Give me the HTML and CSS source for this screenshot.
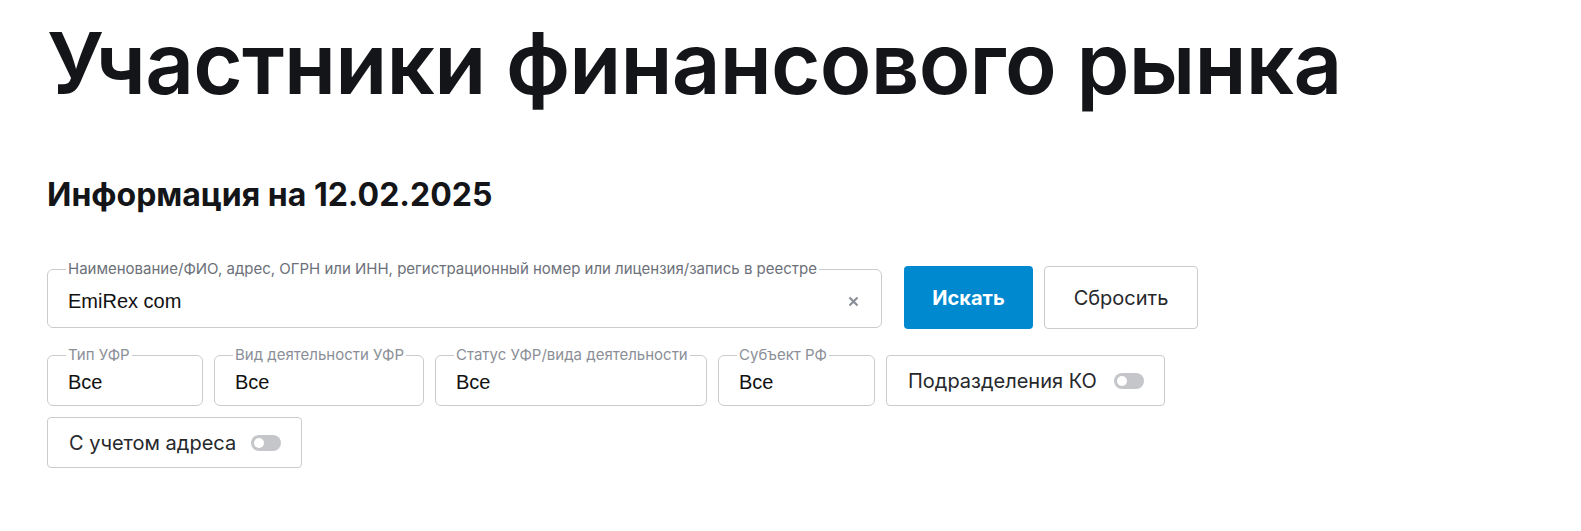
FILE: index.html
```html
<!DOCTYPE html>
<html lang="ru">
<head>
    <meta charset="UTF-8">
    <meta name="viewport" content="width=device-width, initial-scale=1.0">
    <title>Участники финансового рынка</title>
    <link rel="stylesheet" href="styles.css">
</head>
<body>
    <section class="page">
        <h1>Участники финансового рынка</h1>
        <h2>Информация на 12.02.2025</h2>

        <div class="search-row">
            <fieldset class="field field-search">
                <legend>Наименование/ФИО, адрес, ОГРН или ИНН, регистрационный номер или лицензия/запись в реестре</legend>
                <input type="text" value="EmiRex com">
                <svg class="clear" width="11" height="11" viewBox="0 0 11 11">
                    <path d="M1.5 1.5 L9.5 9.5 M9.5 1.5 L1.5 9.5" stroke="#8a8e96" stroke-width="2.2" fill="none"/>
                </svg>
            </fieldset>
            <button class="btn btn-primary">Искать</button>
            <button class="btn btn-reset">Сбросить</button>
        </div>

        <div class="filters filters-main">
            <fieldset class="field w-type">
                <legend>Тип УФР</legend>
                <span class="value">Все</span>
            </fieldset>
            <fieldset class="field w-kind">
                <legend>Вид деятельности УФР</legend>
                <span class="value">Все</span>
            </fieldset>
            <fieldset class="field w-status">
                <legend>Статус УФР/вида деятельности</legend>
                <span class="value">Все</span>
            </fieldset>
            <fieldset class="field w-region">
                <legend>Субъект РФ</legend>
                <span class="value">Все</span>
            </fieldset>
            <label class="switch-box w-ko">
                Подразделения КО
                <span class="switch"></span>
            </label>
        </div>

        <div class="filters">
            <label class="switch-box w-addr">
                С учетом адреса
                <span class="switch"></span>
            </label>
        </div>
    </section>
</body>
</html>
```

FILE: styles.css
```css
body {
    margin: 0;
    padding: 0;
    background-color: #fff;
    font-family: Inter, "Noto Sans", sans-serif;
    color: #141518;
}

.page {
    padding: 14px 47px 0 47px;
}

h1 {
    margin: 0;
    font-size: 85px;
    font-weight: 600;
    line-height: 100px;
    letter-spacing: -0.8px;
}

h2 {
    margin: 62px 0 0 0;
    font-size: 32px;
    font-weight: 700;
    line-height: 38px;
}

.search-row {
    display: flex;
    align-items: flex-end;
    margin-top: 46px;
}

.field {
    margin: 0;
    padding: 0 8px 4px 20px;
    border: 1px solid #c9cbcf;
    border-radius: 6px;
    display: flex;
    align-items: center;
    box-sizing: border-box;
    min-width: 0;
}

.field legend {
    margin-left: -2px;
    padding: 0 2px;
    font-size: 15px;
    line-height: 18px;
    color: #8b8f97;
    white-space: nowrap;
}

.field-search {
    width: 835px;
    height: 68px;
    padding-bottom: 3px;
    padding-right: 22px;
}

.field-search legend {
    color: #6c7079;
}

.field-search input {
    flex-grow: 1;
    border: none;
    outline: none;
    padding: 0;
    font-family: "Liberation Sans", Arial, sans-serif;
    font-size: 20px;
    color: #111;
    background: transparent;
}

.btn {
    height: 63px;
    border-radius: 4px;
    font-family: inherit;
    font-size: 20px;
    cursor: pointer;
    margin-bottom: -1px;
}

.btn-primary {
    width: 129px;
    margin-left: 22px;
    background-color: #0089cf;
    border: none;
    color: #fff;
    font-weight: 700;
}

.btn-reset {
    width: 154px;
    margin-left: 11px;
    background-color: #fff;
    border: 1px solid #c9cbcf;
    color: #26282c;
}

.filters {
    display: flex;
    gap: 11px;
    margin-top: 11px;
    align-items: flex-end;
}

.filters-main {
    margin-top: 18px;
}

.filters .field {
    height: 60px;
}

.value {
    font-family: "Liberation Sans", Arial, sans-serif;
    font-size: 20px;
    color: #111;
}

.w-type { width: 156px; }
.w-kind { width: 210px; }
.w-status { width: 272px; }
.w-region { width: 157px; }
.w-ko { width: 279px; }
.w-addr { width: 255px; }

.switch-box {
    height: 51px;
    box-sizing: border-box;
    border: 1px solid #c9cbcf;
    border-radius: 4px;
    display: flex;
    align-items: center;
    justify-content: space-between;
    padding: 0 20px 0 21px;
    font-size: 20px;
    color: #26282c;
}

.switch {
    position: relative;
    width: 30px;
    height: 16px;
    border-radius: 8px;
    background-color: #c4c6ca;
}

.switch::after {
    content: "";
    position: absolute;
    left: 3px;
    top: 3px;
    width: 10px;
    height: 10px;
    border-radius: 50%;
    background-color: #fff;
}
```
